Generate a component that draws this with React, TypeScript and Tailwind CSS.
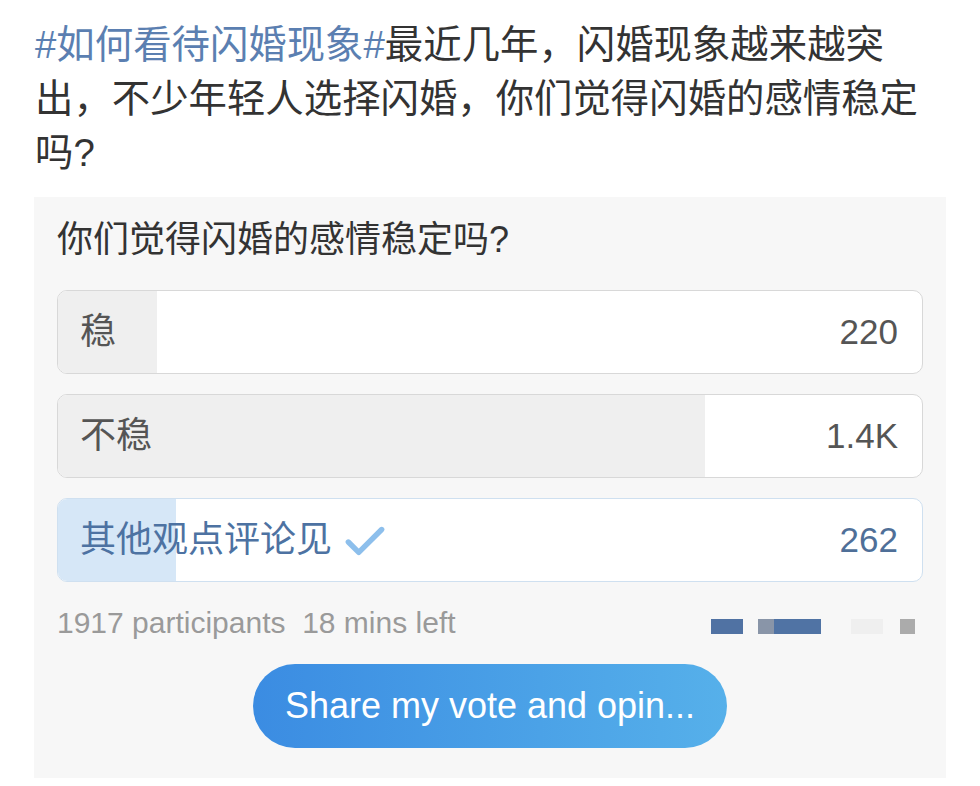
import { Check } from 'lucide-react';

const cjk = '"Liberation Sans", "Noto Sans CJK SC", sans-serif';

const options = [
  { label: '稳', count: 220, text: '220', mine: false },
  { label: '不稳', count: 1435, text: '1.4K', mine: false },
  { label: '其他观点评论见', count: 262, text: '262', mine: true },
];

const total = 1917;

export default function App() {
  return (
    <div className="w-[980px] h-[786px] bg-white overflow-hidden" style={{ fontFamily: cjk }}>
      {/* post body */}
      <div className="pt-[18px] pl-[35px] text-[38.4px] leading-[54px] text-[#333333] whitespace-nowrap">
        <div>
          <span className="text-[#5b7fb1]">#如何看待闪婚现象#</span>最近几年，闪婚现象越来越突
        </div>
        <div>出，不少年轻人选择闪婚，你们觉得闪婚的感情稳定</div>
        <div>吗?</div>
      </div>

      {/* poll card */}
      <div className="mt-[17px] ml-[34px] w-[912px] bg-[#f7f7f7] px-[23px] pt-[21px] pb-[30px] flex flex-col">
        <div className="text-[36px] leading-[44px] text-[#333333]">你们觉得闪婚的感情稳定吗?</div>

        <div className="mt-[28px] flex flex-col gap-[20px]">
          {options.map((o) => (
            <div
              key={o.label}
              className={
                o.mine
                  ? 'relative h-[84px] rounded-[10px] border border-[#cfe0f0] bg-white overflow-hidden'
                  : 'relative h-[84px] rounded-[10px] border border-[#d8d8d8] bg-white overflow-hidden'
              }
            >
              <div
                className={o.mine ? 'absolute inset-y-0 left-0 bg-[#d6e7f7]' : 'absolute inset-y-0 left-0 bg-[#efefef]'}
                style={{ width: `${(o.count / total) * 100}%` }}
              />
              <div className="relative h-full flex items-center justify-between pl-[22px] pr-[24px]">
                <div className={o.mine ? 'flex items-center text-[36px] text-[#4d72a2]' : 'flex items-center text-[36px] text-[#555555]'}>
                  <span>{o.label}</span>
                  {o.mine && <Check size={50} strokeWidth={2.6} className="ml-[8px] mt-[4px] text-[#8dbfec]" />}
                </div>
                <span className={o.mine ? 'text-[35px] text-[#4f6f98]' : 'text-[35px] text-[#555555]'}>{o.text}</span>
              </div>
            </div>
          ))}
        </div>

        <div className="mt-[22px] h-[36px] flex items-center justify-between">
          <span className="text-[30px] text-[#9a9a9a]">1917 participants&nbsp;&nbsp;18 mins left</span>
          {/* blurred avatars */}
          <div className="flex items-center mr-[8px] mt-[8px]">
            <div className="w-[32px] h-[15px] bg-[#5072a3]" />
            <div className="ml-[15px] w-[16px] h-[15px] bg-[#8995a8]" />
            <div className="w-[47px] h-[15px] bg-[#5073a4]" />
            <div className="ml-[30px] w-[32px] h-[15px] bg-[#efefef]" />
            <div className="ml-[17px] w-[15px] h-[15px] bg-[#ababab]" />
          </div>
        </div>

        <div className="mt-[24px] flex justify-center">
          <button className="w-[474px] h-[84px] rounded-full bg-gradient-to-r from-[#3b8ce2] to-[#56b0ea] text-white text-[36px]">
            Share my vote and opin...
          </button>
        </div>
      </div>
    </div>
  );
}
